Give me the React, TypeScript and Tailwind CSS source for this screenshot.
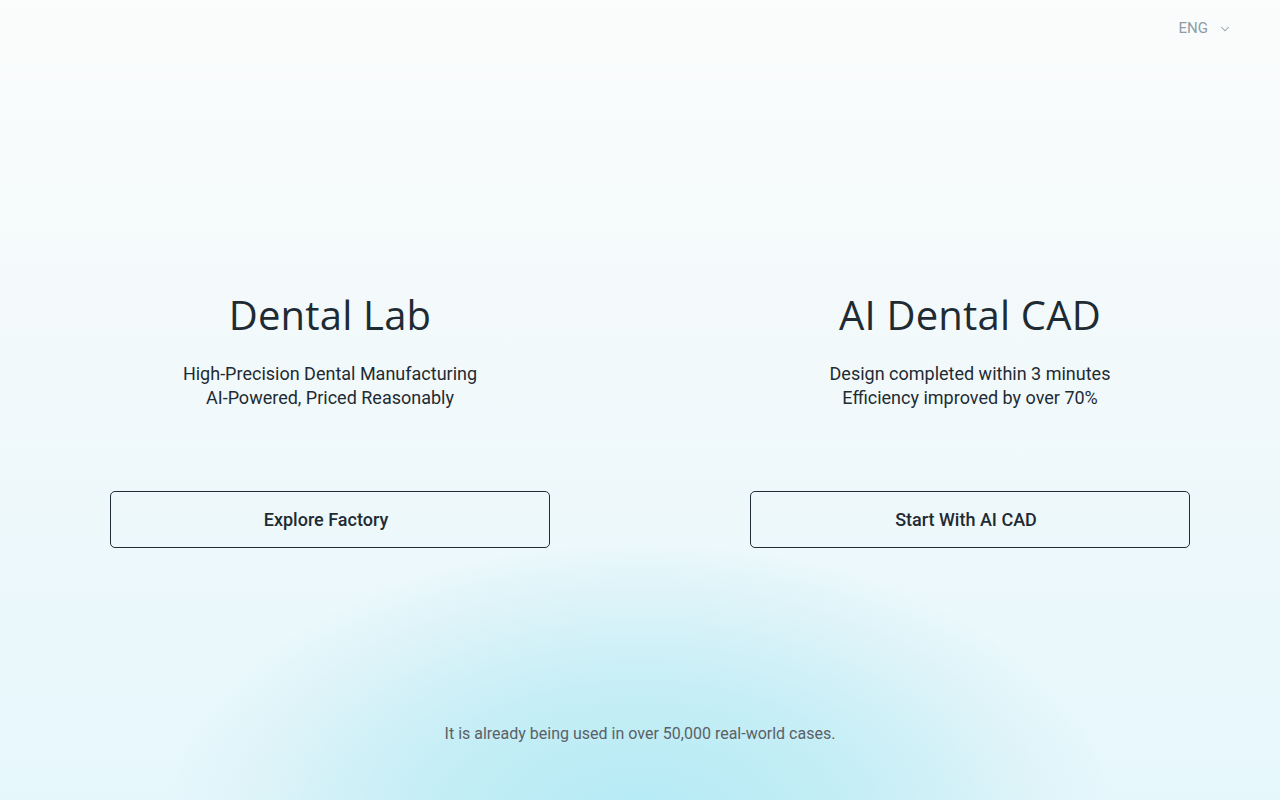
import { ChevronDown } from 'lucide-react';

const COLUMNS = [
  {
    title: 'Dental Lab',
    lines: ['High-Precision Dental Manufacturing', 'AI-Powered, Priced Reasonably'],
    cta: 'Explore Factory',
  },
  {
    title: 'AI Dental CAD',
    lines: ['Design completed within 3 minutes', 'Efficiency improved by over 70%'],
    cta: 'Start With AI CAD',
  },
];

export default function App() {
  return (
    <div className="relative h-[800px] w-full overflow-hidden bg-gradient-to-b from-[#fbfcfc] via-[#f1f9fb] to-[#e6f7fc] font-['Roboto',sans-serif] text-[#1e2a31]">
      {/* soft cyan glow at the bottom */}
      <div className="pointer-events-none absolute left-[170px] top-[545px] h-[560px] w-[940px] rounded-[50%] bg-[radial-gradient(ellipse_at_center,#b3eaf5_0%,#c6eef6_35%,#dff4f9_60%,rgba(230,247,252,0)_72%)]" />

      <header className="relative flex justify-end pr-[48px] pt-[18px]">
        <button className="flex items-center gap-[10px] text-[15px] leading-[20px] text-[#8d9ca5]">
          ENG
          <ChevronDown size={14} strokeWidth={1.75} className="mt-[1px]" />
        </button>
      </header>

      <main className="relative flex gap-[200px] pl-[110px] pt-[251px]">
        {COLUMNS.map((c) => (
          <section key={c.title} className="flex w-[440px] flex-col items-center">
            <h1 className="font-['Open_Sans',sans-serif] text-[40px] leading-[52px] tracking-[0.2px] text-[#1f2b33]">
              {c.title}
            </h1>
            <div className="mt-[21px] text-center text-[18px] leading-[24px] text-[#1f2b33]">
              {c.lines.map((l) => (
                <p key={l}>{l}</p>
              ))}
            </div>
            <button className="mt-[81px] h-[57px] w-[440px] rounded-[5px] border border-[#1f2d35] pr-[8px] text-[18px] font-medium text-[#1f2b33]">
              {c.cta}
            </button>
          </section>
        ))}
      </main>

      <p className="absolute left-0 right-0 top-[723px] text-center text-[16px] leading-[22px] text-[#5b6065]">
        It is already being used in over 50,000 real-world cases.
      </p>
    </div>
  );
}
